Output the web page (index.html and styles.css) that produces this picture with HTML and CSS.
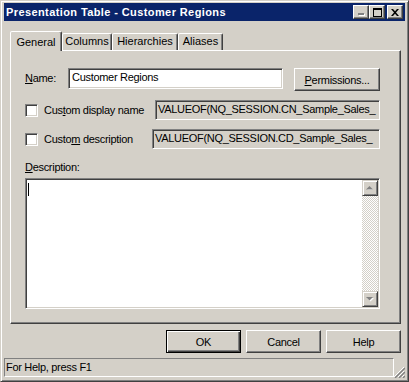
FILE: index.html
```html
<!DOCTYPE html>
<html>
<head>
<meta charset="utf-8">
<link rel="stylesheet" href="styles.css">
</head>
<body>
<div class="window">
  <div class="titlebar">
    <span class="title">Presentation Table - Customer Regions</span>
    <div class="caption-btns">
      <span class="cbtn cbtn-min"><svg width="7" height="3" viewBox="0 0 7 3"><rect x="1" y="1" width="6" height="2" fill="#fff"/><rect x="0" y="0" width="6" height="2" fill="#808080"/></svg></span>
      <span class="cbtn"><svg width="9" height="9" viewBox="0 0 9 9"><rect x="0.5" y="0.5" width="8" height="8" fill="none" stroke="#000"/><rect x="0" y="1" width="9" height="1" fill="#000"/></svg></span>
      <span class="cbtn cbtn-close"><svg width="8" height="7" viewBox="0 0 8 7"><path d="M0 0h2l2 2.2L6 0h2L5 3.5L8 7H6L4 4.8L2 7H0l3-3.5z" fill="#000"/></svg></span>
    </div>
  </div>

  <div class="tabs">
    <div class="tab tab-active">General</div>
    <div class="tab tab-columns">Columns</div>
    <div class="tab tab-hier">Hierarchies</div>
    <div class="tab tab-alias">Aliases</div>
  </div>

  <div class="panel">
    <div class="row row-name">
      <span class="lbl-name"><u>N</u>ame:</span>
      <div class="input name-input">Customer Regions</div>
      <div class="btn perm-btn"><u>P</u>ermissions...</div>
    </div>
    <div class="row row-check">
      <span class="checkbox"></span>
      <span class="check-label">Cus<u>t</u>om display name</span>
      <div class="input ro field1">VALUEOF(NQ_SESSION.CN_Sample_Sales_</div>
    </div>
    <div class="row row-check">
      <span class="checkbox"></span>
      <span class="check-label">Custo<u>m</u> description</span>
      <div class="input ro field2">VALUEOF(NQ_SESSION.CD_Sample_Sales_</div>
    </div>
    <div class="desc-label"><u>D</u>escription:</div>
    <div class="textarea">
      <div class="text-body"><span class="caret"></span></div>
      <div class="scrollbar">
        <div class="sbtn"><svg width="8" height="5" viewBox="0 0 8 5"><path d="M4 1L7 4H1z" fill="#fff"/><path d="M3.5 0L7 3.5H0z" fill="#808080"/></svg></div>
        <div class="track"></div>
        <div class="sbtn"><svg width="8" height="5" viewBox="0 0 8 5"><path d="M1 1h7L4.5 4.5z" fill="#fff"/><path d="M0 0h7L3.5 3.5z" fill="#808080"/></svg></div>
      </div>
    </div>
  </div>

  <div class="buttons">
    <div class="btn dlg-btn default-btn">OK</div>
    <div class="btn dlg-btn">Cancel</div>
    <div class="btn dlg-btn">Help</div>
  </div>

  <div class="statusbar">
    <div class="status-text">For Help, press F1</div>
    <div class="grip">
      <svg width="11" height="11" viewBox="0 0 11 11">
        <path d="M10 0L0 10M10 4L4 10M10 8L8 10" stroke="#fff" stroke-width="1"/>
        <path d="M11 1L1 11M11 5L5 11M11 9L9 11" stroke="#808080" stroke-width="1.4"/>
      </svg>
    </div>
  </div>
</div>
</body>
</html>
```

FILE: styles.css
```css
* { box-sizing: border-box; }
html, body { margin: 0; padding: 0; }
body {
  width: 409px;
  height: 382px;
  overflow: hidden;
  background: #d4d0c8;
  font-family: "Liberation Sans", Arial, sans-serif;
  font-size: 11px;
  letter-spacing: -0.3px;
  color: #000;
}
u { text-decoration: underline; text-underline-offset: 1px; }

.window {
  width: 409px;
  height: 382px;
  background: #d4d0c8;
  border: 1px solid;
  border-color: #d4d0c8 #404040 #404040 #d4d0c8;
  box-shadow: inset 1px 1px #fff, inset -1px -1px #808080;
  padding: 2px 3px 3px 3px;
  display: flex;
  flex-direction: column;
}

/* title bar */
.titlebar {
  height: 18px;
  flex: none;
  background: #0a246a;
  display: flex;
  align-items: center;
  padding: 0 2px 0 2px;
}
.title {
  color: #fff;
  font-weight: bold;
  font-size: 11px;
  flex: 1;
  white-space: nowrap;
  letter-spacing: 0.4px;
}
.caption-btns { display: flex; }
.cbtn {
  width: 16px;
  height: 14px;
  background: #d4d0c8;
  border: 1px solid;
  border-color: #fff #404040 #404040 #fff;
  box-shadow: inset -1px -1px #808080;
  display: flex;
  align-items: center;
  justify-content: center;
}
.cbtn svg { display: block; }
.cbtn-min { align-items: flex-end; justify-content: flex-start; padding: 0 0 2px 4px; }
.cbtn-close { margin-left: 2px; }

/* tabs */
.tabs {
  display: flex;
  align-items: flex-end;
  height: 19px;
  margin-top: 10px;
  margin-left: 6px;
  flex: none;
}
.tab {
  height: 17px;
  border: 1px solid;
  border-bottom: none;
  border-color: #fff #404040 transparent #fff;
  border-radius: 2px 2px 0 0;
  box-shadow: inset -1px 0 #808080;
  text-align: center;
  padding-top: 1px;
  line-height: 13px;
  background: #d4d0c8;
  letter-spacing: 0;
}
.tab-active {
  width: 52px;
  height: 20px;
  margin-bottom: -1px;
  padding-top: 4px;
  position: relative;
  z-index: 1;
}
.tab-columns { width: 50px; }
.tab-hier { width: 66px; }
.tab-alias { width: 45px; }

/* panel */
.panel {
  width: 391px;
  height: 274px;
  flex: none;
  margin-left: 6px;
  border: 1px solid;
  border-color: #fff #404040 #404040 #fff;
  box-shadow: inset -1px -1px #808080;
  padding: 17px 20px 0 14px;
}
.row { display: flex; align-items: center; }
.row-name { height: 23px; align-items: flex-start; }
.lbl-name { width: 43px; line-height: 21px; }

.input {
  border: 1px solid;
  border-color: #808080 #fff #fff #808080;
  box-shadow: inset 1px 1px #404040, inset -1px -1px #d4d0c8;
  background: #fff;
  white-space: nowrap;
  overflow: hidden;
}
.name-input {
  width: 215px;
  height: 21px;
  line-height: 17px;
  padding-left: 3px;
}
.btn {
  background: #d4d0c8;
  border: 1px solid;
  border-color: #fff #404040 #404040 #fff;
  box-shadow: inset -1px -1px #808080;
  display: flex;
  align-items: center;
  justify-content: center;
}
.perm-btn { width: 86px; height: 23px; margin-left: auto; }

.row-check { height: 20px; margin-top: 9px; }
.checkbox {
  width: 13px;
  height: 13px;
  flex: none;
  background: #fff;
  border: 1px solid;
  border-color: #808080 #fff #fff #808080;
  box-shadow: inset 1px 1px #404040, inset -1px -1px #d4d0c8;
}
.check-label { margin-left: 6px; white-space: nowrap; }
.ro {
  background: #d4d0c8;
  height: 20px;
  line-height: 16px;
  padding-left: 2px;
  margin-left: auto;
}
.field1 { width: 225px; }
.field2 { width: 228px; }

.desc-label { margin-top: 12px; line-height: 13px; }
.textarea {
  margin-top: 4px;
  width: 355px;
  height: 131px;
  display: flex;
  background: #fff;
  border: 1px solid;
  border-color: #808080 #fff #fff #808080;
  box-shadow: inset 1px 1px #404040, inset -1px -1px #d4d0c8;
  padding: 1px;
}
.text-body { flex: 1; }
.caret {
  display: block;
  width: 1px;
  height: 13px;
  background: #000;
  margin: 3px 0 0 1px;
}
.scrollbar {
  width: 16px;
  display: flex;
  flex-direction: column;
}
.sbtn {
  width: 16px;
  height: 16px;
  flex: none;
  background: #d4d0c8;
  border: 1px solid;
  border-color: #d4d0c8 #404040 #404040 #d4d0c8;
  box-shadow: inset 1px 1px #fff, inset -1px -1px #808080;
  display: flex;
  align-items: center;
  justify-content: center;
}
.sbtn svg { display: block; }
.track {
  flex: 1;
  background: repeating-conic-gradient(#fff 0 25%, #d4d0c8 0 50%) 0 0 / 2px 2px;
}

/* dialog buttons */
.buttons {
  display: flex;
  justify-content: flex-end;
  gap: 5px;
  margin-top: 6px;
  padding-right: 4px;
  flex: none;
}
.dlg-btn { width: 75px; height: 23px; }
.default-btn {
  border-color: #000;
  box-shadow: inset 1px 1px #fff, inset -1px -1px #404040, inset -2px -2px #808080;
}

/* status bar */
.statusbar {
  display: flex;
  height: 19px;
  margin-top: 5px;
  flex: none;
}
.status-text {
  width: 392px;
  height: 19px;
  border: 1px solid;
  border-color: #808080 #fff #fff #808080;
  padding-left: 1px;
  line-height: 17px;
  white-space: nowrap;
}
.grip {
  flex: 1;
  display: flex;
  align-items: flex-end;
  justify-content: flex-end;
}
.grip svg { display: block; margin-bottom: -1px; }
```
